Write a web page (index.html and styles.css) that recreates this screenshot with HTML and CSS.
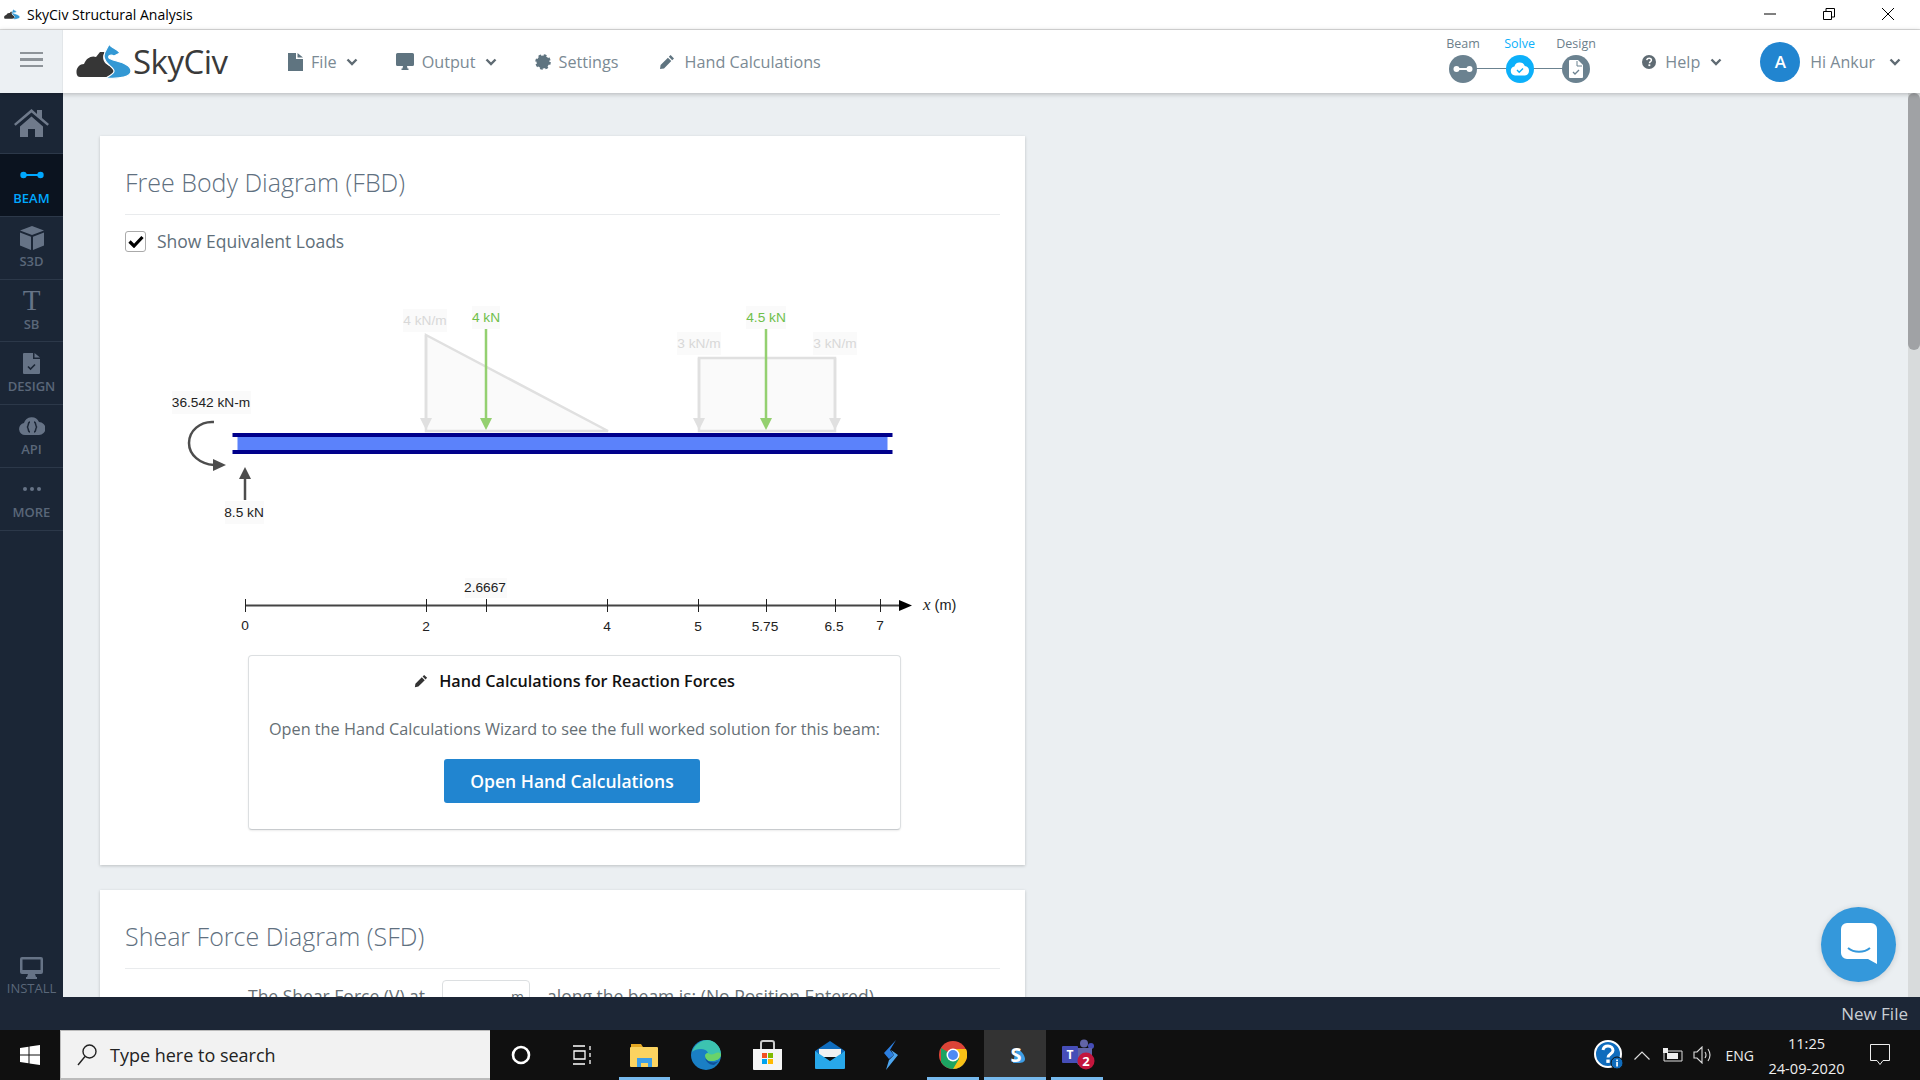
FILE: index.html
```html
<!DOCTYPE html>
<html lang="en">
<head>
  <meta charset="UTF-8" />
  <meta name="viewport" content="width=device-width, initial-scale=1.0"/>
  <title>SkyCiv Structural Analysis</title>
  <link rel="stylesheet" href="styles.css">
</head>
<body>
  <svg class="sprites" width="0" height="0">
    <symbol id="pencil" viewBox="0 0 16 16"><path d="M11.6 1 15 4.4 13.2 6.2 9.8 2.8ZM8.9 3.7 12.3 7.1 5 14.4 1 15 1.6 11Z"/></symbol>
    <symbol id="chev" viewBox="0 0 12 8"><path d="M1.5 1.5 6 6l4.500-4.500" fill="none" stroke="currentColor" stroke-width="2.400"/></symbol>
    <symbol id="logo-mark" viewBox="0 0 56 36">
      <path d="M1 31C-1 25 3 20 8 20 10 14 16 11 20 13L24 8h5C25 14 28 20 34 22 40 26 40 32 35 33H6C3 33 2 33 1 31Z" fill="#363636"/>
      <path d="M33 0C35 4 42 5 44 9L38 12C34 10 32 12 33 14 35 17 55 18 55 27 55 33 44 35 30 34 34 31 38 30 38 27 38 23 28 20 28 12 28 7 32 4 33 0Z" fill="#3398d4" stroke="#fff" stroke-width="1.200"/>
    </symbol>
  </svg>

  <div class="titlebar">
    <svg class="title-logo" width="16" height="11"><use href="#logo-mark"/></svg>
    <span class="title-text">SkyCiv Structural Analysis</span>
    <div class="win-controls">
      <svg width="12" height="12" viewBox="0 0 12 12"><path d="M0 6h12" stroke="#000"/></svg>
      <svg width="12" height="12" viewBox="0 0 12 12" fill="none" stroke="#000"><path d="M.5 3.500h8v8h-8zM3 3.500V.5h8.500V9H8.500"/></svg>
      <svg width="12" height="12" viewBox="0 0 12 12"><path d="M0 0l12 12M12 0L0 12" stroke="#000"/></svg>
    </div>
  </div>

  <div class="app">
    <div class="topbar">
      <div class="menu-btn"><span></span><span></span><span></span></div>
      <header class="header">
        <div class="logo">
          <svg width="56" height="36"><use href="#logo-mark"/></svg>
          <span class="logo-text">SkyCiv</span>
        </div>
        <nav class="nav">
          <a class="nav-item">
            <svg class="ico" width="15" height="18" viewBox="0 0 15 18"><path d="M0 0h8v6h7v12H0zM9.500 0 15 4.500H9.500z"/></svg>
            File
            <svg class="chev" width="12" height="8"><use href="#chev"/></svg>
          </a>
          <a class="nav-item">
            <svg class="ico" width="18" height="17" viewBox="0 0 18 17"><path d="M1.500 0h15A1.500 1.500 0 0 1 18 1.500v10a1.500 1.500 0 0 1-1.500 1.500H11l.5 2.500h1v1.500h-7v-1.500h1L7 13H1.500A1.500 1.500 0 0 1 0 11.500v-10A1.500 1.500 0 0 1 1.500 0z"/></svg>
            Output
            <svg class="chev" width="12" height="8"><use href="#chev"/></svg>
          </a>
          <a class="nav-item">
            <svg class="ico" width="16" height="16" viewBox="0 0 16 16" fill="none" stroke="#5f7480"><circle cx="8" cy="8" r="3.800" stroke-width="2.800"/><circle cx="8" cy="8" r="6.500" stroke-width="2.600" stroke-dasharray="2.600 2.500"/></svg>
            Settings
          </a>
          <a class="nav-item nav-hand">
            <svg class="ico" width="16" height="16"><use href="#pencil"/></svg>
            Hand Calculations
          </a>
        </nav>
        <div class="header-right">
          <div class="steps">
            <div class="step">
              <span>Beam</span>
              <span class="step-dot">
                <svg width="20" height="8" viewBox="0 0 20 8"><path d="M3 4h14" stroke="#fff" stroke-width="2"/><circle cx="3.500" cy="4" r="3" fill="#fff"/><circle cx="16.500" cy="4" r="3" fill="#fff"/></svg>
              </span>
            </div>
            <div class="step step-active">
              <span>Solve</span>
              <span class="step-dot">
                <svg width="20" height="14" viewBox="0 0 20 14"><path d="M5 13.500a4.500 4.500 0 0 1-.6-8.900A5.500 5.500 0 0 1 14.800 4 4.800 4.800 0 0 1 15 13.500z" fill="#fff"/><path d="M7 8l2.200 2.200L13 6.500" fill="none" stroke="#0cb0fa" stroke-width="1.400"/></svg>
              </span>
            </div>
            <div class="step">
              <span>Design</span>
              <span class="step-dot">
                <svg width="14" height="18" viewBox="0 0 14 18"><path d="M1 0h8l5 5v12a1 1 0 0 1-1 1H1a1 1 0 0 1-1-1V1a1 1 0 0 1 1-1z" fill="#fff"/><path d="M4 12l2 2 4-4" fill="none" stroke="#6b8290" stroke-width="1.300"/><path d="M8 1v5h5" fill="none" stroke="#6b8290"/></svg>
              </span>
            </div>
          </div>
          <a class="nav-item nav-help">
            <svg width="14" height="14" viewBox="0 0 14 14"><circle cx="7" cy="7" r="7" fill="#5f6b73"/><path d="M4.700 5.200C5 3.800 6 3.300 7.100 3.300c1.300 0 2.300.8 2.300 1.900 0 1.500-1.900 1.500-1.900 3" fill="none" stroke="#fff" stroke-width="1.500"/><rect x="6.400" y="9.300" width="1.900" height="1.800" fill="#fff"/></svg>
            Help
            <svg class="chev" width="12" height="8"><use href="#chev"/></svg>
          </a>
          <a class="nav-item user">
            <span class="avatar">A</span>
            Hi Ankur
            <svg class="chev" width="12" height="8"><use href="#chev"/></svg>
          </a>
        </div>
      </header>
    </div>

    <div class="body">
      <aside class="sidebar">
        <div class="side-item side-home">
          <svg width="35" height="28" viewBox="0 0 35 28" fill="#6f7a8b"><path d="M17.500 0 0 15l1.600 1.800L17.500 3.400l15.900 13.400L35 15l-7-6V1h-5v4zM6 17.500V28h8v-8h7v8h8V17.500L17.500 7.500z"/></svg>
        </div>
        <div class="side-item side-active">
          <span class="side-icon"><svg width="24" height="8" viewBox="0 0 24 8"><path d="M3 4h18" stroke="#00a8ff" stroke-width="2"/><circle cx="3.500" cy="4" r="3.200" fill="#00a8ff"/><circle cx="20.500" cy="4" r="3.200" fill="#00a8ff"/></svg></span>
          <span class="side-label">BEAM</span>
        </div>
        <div class="side-item">
          <span class="side-icon"><svg width="24" height="24" viewBox="0 0 24 24" fill="#667386"><path d="M12 0 24 4.500 12 9 0 4.500zM0 6.500 11 10.700V24L0 19.500zM24 6.500V19.500L13 24V10.700z"/></svg></span>
          <span class="side-label">S3D</span>
        </div>
        <div class="side-item">
          <span class="side-icon side-t">T</span>
          <span class="side-label">SB</span>
        </div>
        <div class="side-item">
          <span class="side-icon"><svg width="17" height="21" viewBox="0 0 17 21"><path d="M1 0h9v6h7v14a1 1 0 0 1-1 1H1a1 1 0 0 1-1-1V1a1 1 0 0 1 1-1zM11.500 0 17 4.500h-5.500z" fill="#667386"/><path d="M5 13.500l2.500 2.500 4.500-4.500" fill="none" stroke="#1b2636" stroke-width="1.600"/></svg></span>
          <span class="side-label">DESIGN</span>
        </div>
        <div class="side-item">
          <span class="side-icon"><svg width="26" height="18" viewBox="0 0 26 18"><path d="M6 18a6 6 0 0 1-1-11.900A8 8 0 0 1 20 5a6.500 6.500 0 0 1 0 13z" fill="#667386"/><path d="M11 5C8.500 5 10 9.500 8 10c2 .5.500 5 3 5M15 5c2.500 0 1 4.500 3 5-2 .5-.5 5-3 5" fill="none" stroke="#1b2636" stroke-width="1.500"/></svg></span>
          <span class="side-label">API</span>
        </div>
        <div class="side-item">
          <span class="side-icon"><svg width="18" height="4" viewBox="0 0 18 4" fill="#667386"><circle cx="2" cy="2" r="2"/><circle cx="9" cy="2" r="2"/><circle cx="16" cy="2" r="2"/></svg></span>
          <span class="side-label">MORE</span>
        </div>
        <div class="side-install">
          <svg width="23" height="22" viewBox="0 0 23 22"><path d="M2 0h19a2 2 0 0 1 2 2v13a2 2 0 0 1-2 2h-6l1 3h1v2H6v-2h1l1-3H2a2 2 0 0 1-2-2V2a2 2 0 0 1 2-2z" fill="#667386"/><rect x="2.500" y="2.500" width="18" height="10.500" fill="#1b2636"/></svg>
          <span class="side-label">INSTALL</span>
        </div>
      </aside>

      <main class="content">
        <section class="card">
          <h2>Free Body Diagram (FBD)</h2>
          <label class="check-row">
            <span class="checkbox"><svg width="16" height="13" viewBox="0 0 16 13"><path d="M1.500 6.500 6 11l8.500-9" fill="none" stroke="#000" stroke-width="3.200"/></svg></span>
            Show Equivalent Loads
          </label>

          <svg class="fbd" width="875" height="375" viewBox="125 270 875 375">
            <!-- load labels -->
            <g class="bg-label">
              <rect x="403" y="309" width="44" height="23"/><rect x="472" y="306" width="28" height="23"/>
              <rect x="677" y="332" width="44" height="23"/><rect x="813" y="332" width="44" height="23"/>
              <rect x="746" y="306" width="40" height="23"/><rect x="172" y="391" width="79" height="23"/>
              <rect x="225" y="501" width="39" height="23"/>
            </g>

            <!-- equivalent (grey) loads -->
            <path class="dist" d="M426 335 608 431H426Z"/>
            <path class="dist" d="M699 358H835V431H699Z"/>
            <path class="grey-line" d="M426 335V419M699 358V419M835 358V419"/>
            <path class="grey-head" d="M420 418h12l-6 12ZM693 418h12l-6 12ZM829 418h12l-6 12Z"/>
            <text class="lbl lbl-grey" x="425" y="325" text-anchor="middle">4 kN/m</text>
            <text class="lbl lbl-grey" x="699" y="348" text-anchor="middle">3 kN/m</text>
            <text class="lbl lbl-grey" x="835" y="348" text-anchor="middle">3 kN/m</text>

            <!-- point loads -->
            <path class="green-line" d="M486 329V419M766 329V419"/>
            <path class="green-head" d="M480 418h12l-6 12ZM760 418h12l-6 12Z"/>
            <text class="lbl lbl-green" x="486" y="322" text-anchor="middle">4 kN</text>
            <text class="lbl lbl-green" x="766" y="322" text-anchor="middle">4.5 kN</text>

            <!-- beam -->
            <rect x="237.500" y="436" width="650" height="15" fill="#5b82fb"/>
            <rect x="232.500" y="433" width="660" height="4" fill="#00008b"/>
            <rect x="232.500" y="450" width="660" height="4" fill="#00008b"/>

            <!-- support reactions -->
            <path class="react-line" d="M214 422C200 421 189 431 189 443 189 455 200 464 214 465"/>
            <path class="react-head" d="M213 459 226 465 213 471Z"/>
            <path class="react-line" d="M245 500V478"/>
            <path class="react-head" d="M239 479 245 467 251 479Z"/>
            <text class="lbl" x="211" y="407" text-anchor="middle">36.542 kN-m</text>
            <text class="lbl" x="244" y="517" text-anchor="middle">8.5 kN</text>

            <!-- x axis -->
            <rect class="bg-tick" x="465" y="578" width="42" height="20"/>
            <path class="axis" d="M245 605.500H902"/>
            <path class="tick" d="M245.500 599V612M426.500 599V612M486.500 599V612M607.500 599V612M698.500 599V612M766.500 599V612M835.500 599V612M880.500 599V612"/>
            <path d="M899 600 912 605.500 899 611Z" fill="#000"/>
            <g class="tick-lbl" text-anchor="middle">
              <text x="245" y="630">0</text><text x="426" y="631">2</text><text x="485" y="592">2.6667</text>
              <text x="607" y="631">4</text><text x="698" y="631">5</text><text x="765" y="631">5.75</text>
              <text x="834" y="631">6.5</text><text x="880" y="630">7</text>
            </g>
            <text class="tick-lbl x-name" x="923" y="610"><tspan class="x-var">x</tspan> (m)</text>
          </svg>

          <div class="calc-box">
            <h4>
              <svg class="pencil-dark" width="14" height="14"><use href="#pencil"/></svg>
              Hand Calculations for Reaction Forces
            </h4>
            <p>Open the Hand Calculations Wizard to see the full worked solution for this beam:</p>
            <button type="button">Open Hand Calculations</button>
          </div>
        </section>

        <section class="card">
          <h2>Shear Force Diagram (SFD)</h2>
          <div class="position-row">
            The Shear Force (V) at
            <span class="pos-input">m</span>
            along the beam is: (No Position Entered)
          </div>
        </section>
      </main>

      <div class="scrollbar"><div class="thumb"></div></div>

      <div class="chat-btn">
        <svg width="36" height="41" viewBox="0 0 36 41"><path d="M6 0h24a6 6 0 0 1 6 6v35l-9-5H6a6 6 0 0 1-6-6V6a6 6 0 0 1 6-6z" fill="#fff"/><path d="M7 25c6 5 16 5 22 0" fill="none" stroke="#3498db" stroke-width="2"/></svg>
      </div>
    </div>
  </div>

  <div class="statusbar">New File</div>

  <div class="taskbar">
    <div class="start">
      <svg width="20" height="20" viewBox="0 0 20 20" fill="#fff"><path d="M0 3 8.500 1.700V9.500H0zM9.500 1.500 20 0V9.500H9.500zM0 10.500H8.500V18.300L0 17zM9.500 10.500H20V20L9.500 18.500z"/></svg>
    </div>
    <div class="search">
      <svg width="22" height="24" viewBox="0 0 22 24" fill="none" stroke="#222" stroke-width="1.400"><circle cx="13.500" cy="8.500" r="6.500"/><path d="M9 13.500 2 22"/></svg>
      <span>Type here to search</span>
    </div>
    <div class="task"><svg width="20" height="20" viewBox="0 0 20 20"><circle cx="10" cy="10" r="8" fill="none" stroke="#fff" stroke-width="2.600"/></svg></div>
    <div class="task"><svg width="20" height="20" viewBox="0 0 20 20" fill="none" stroke="#fff" stroke-width="1.300"><path d="M0 1h12M0 19h12M1 6h11v8H1zM17 1v4M17 8v4M17 15v4"/></svg></div>
    <div class="task task-open">
      <svg width="28" height="24" viewBox="0 0 28 24"><path d="M1 1h10l2 3H1z" fill="#e5a823"/><rect y="4" width="28" height="20" rx="1" fill="#fbd360"/><path d="M7 15h15v9h-4v-4h-7v4H7z" fill="#3d9ee6"/></svg>
    </div>
    <div class="task">
      <svg width="30" height="30" viewBox="0 0 30 30"><circle cx="15" cy="15" r="15" fill="#1a7fc4"/><path d="M1 12C4 3 12 0 16 0c8 0 14 7 14 14 0 5-5 7-9 7-5 0-7-2-7-5 0-2 2-3 3-3-1-3-4-4-7-4-4 0-7 1-9 3z" fill="#3cc3b0"/><path d="M30 14c0 5-5 7-9 7-5 0-7-2-7-5 0-2 2-3 3-3 1 1 3 2 6 1 2-1 4-3 7 0z" fill="#6ad36a"/><path d="M14 16c0 6 5 9 9 9l5-4c-6 3-13 1-14-5z" fill="#0f4f9a"/></svg>
    </div>
    <div class="task">
      <svg width="29" height="30" viewBox="0 0 29 30"><path d="M8 9V3a2 2 0 0 1 2-2h9a2 2 0 0 1 2 2v6" fill="none" stroke="#ccc" stroke-width="2"/><path d="M0 9h29v20a1 1 0 0 1-1 1H1a1 1 0 0 1-1-1z" fill="#f5f5f5"/><rect x="9" y="13" width="5" height="5" fill="#f25022"/><rect x="15" y="13" width="5" height="5" fill="#7fba00"/><rect x="9" y="19" width="5" height="5" fill="#00a4ef"/><rect x="15" y="19" width="5" height="5" fill="#ffb900"/></svg>
    </div>
    <div class="task">
      <svg width="30" height="28" viewBox="0 0 30 28"><path d="M0 10 15 0l15 10v2H0z" fill="#0f6cbd"/><path d="M4 8h22v8H4z" fill="#f2f2f2"/><path d="M0 10l15 10 15-10v17a1 1 0 0 1-1 1H1a1 1 0 0 1-1-1z" fill="#28a8ea"/></svg>
    </div>
    <div class="task">
      <svg width="16" height="30" viewBox="0 0 16 30"><path d="M13 0 1 13l5 6 5-4-4-5z" fill="#2c7fe0"/><path d="M8 10l7 5L3 30l3-10 5-5z" fill="#4da6ef"/></svg>
    </div>
    <div class="task task-open">
      <svg width="28" height="28" viewBox="0 0 28 28"><circle cx="14" cy="14" r="14" fill="#dc4437"/><path d="M14 14 26 21A14 14 0 0 1 14 28 14 14 0 0 1 2 21L2 7z" fill="#1da462"/><path d="M14 8h13a14 14 0 0 1-1 13 14 14 0 0 1-12 7l6-10z" fill="#f9c116"/><circle cx="14" cy="14" r="6.500" fill="#fff"/><circle cx="14" cy="14" r="5" fill="#4d8bf5"/></svg>
    </div>
    <div class="task task-open task-active">
      <svg class="s-icon" width="18" height="18" viewBox="0 0 18 18"><path d="M9 3C13 3 18 9 18 13 18 16 15 17 11 17H6z" fill="#3d9ee6"/><text class="s-app" x="9" y="16" text-anchor="middle">S</text></svg>
    </div>
    <div class="task task-open">
      <svg class="teams" width="34" height="32" viewBox="0 0 34 32">
        <circle cx="22" cy="4.500" r="4" fill="#6264a7"/><circle cx="29" cy="7" r="3" fill="#464eb8"/>
        <path d="M14 9h16v12a6 6 0 0 1-6 6h-4a6 6 0 0 1-6-6z" fill="#6264a7"/>
        <rect y="7" width="16" height="17" rx="1" fill="#464eb8"/>
        <circle cx="24" cy="22" r="8.500" fill="#c4163d"/>
        <text class="teams-t" x="8" y="20" text-anchor="middle">T</text>
        <text class="teams-n" x="24" y="27" text-anchor="middle">2</text>
      </svg>
    </div>
    <div class="tray">
      <svg width="30" height="30" viewBox="0 0 30 30"><circle cx="14" cy="14" r="13" fill="#0f6cbd" stroke="#fff" stroke-width="2"/><path d="M9 10c.5-3 3-4 5-4 3 0 5 2 5 4.500 0 3.500-5 3.500-5 7" fill="none" stroke="#fff" stroke-width="3"/><rect x="12.300" y="19.500" width="3.400" height="3.400" fill="#fff"/><circle cx="23" cy="23" r="6" fill="#0f6cbd" stroke="#101010"/><rect x="22.200" y="22" width="1.700" height="4.500" fill="#fff"/><rect x="22.200" y="19.500" width="1.700" height="1.700" fill="#fff"/></svg>
      <svg class="tray-chev" width="16" height="9" viewBox="0 0 16 9"><path d="M.5 8.500 8 1l7.500 7.500" fill="none" stroke="#ddd" stroke-width="1.200"/></svg>
      <svg class="tray-batt" width="20" height="14" viewBox="0 0 20 14"><path d="M1 3h18v10H1z" fill="none" stroke="#ddd"/><rect x="4" y="5" width="11" height="6" fill="#eee"/><rect x="0" y="0" width="5" height="5" fill="#eee"/></svg>
      <svg class="tray-vol" width="20" height="18" viewBox="0 0 20 18" fill="none" stroke="#ddd" stroke-width="1.100"><path d="M1 6h3l5-5v16l-5-5H1zM12 6q2 3 0 6M15 3q4 6 0 12"/></svg>
      <span class="tray-lang">ENG</span>
      <div class="clock"><span>11:25</span><span>24-09-2020</span></div>
      <svg class="tray-note" width="20" height="22" viewBox="0 0 20 22"><path d="M.5.5h19v16H13l-3 4-3-4H.5z" fill="none" stroke="#eee"/></svg>
    </div>
  </div>
</body>
</html>
```

FILE: styles.css
```css
* {
  box-sizing: border-box;
}

html,
body {
  height: 100%;
}

body {
  margin: 0;
  display: flex;
  flex-direction: column;
  overflow: hidden;
  font-family: 'Open Sans', sans-serif;
  background-color: #ebeff2;
}

.sprites {
  position: absolute;
}

/* window title bar */
.titlebar {
  height: 30px;
  flex: none;
  display: flex;
  align-items: center;
  padding: 0 26px 1px 4px;
  background-color: #fff;
  border-bottom: 1px solid #dcdcdc;
  font-size: 14px;
  color: #000;
}

.title-logo {
  margin-right: 7px;
}

.win-controls {
  margin-left: auto;
  display: flex;
  gap: 47px;
}

.app {
  flex: 1;
  min-height: 0;
  display: flex;
  flex-direction: column;
}

/* app header */
.topbar {
  height: 63px;
  flex: none;
  display: flex;
  position: relative;
  z-index: 2;
  background-color: #fff;
  box-shadow: 0 1px 5px rgba(0, 0, 0, 0.25);
}

.menu-btn {
  width: 63px;
  flex: none;
  display: flex;
  flex-direction: column;
  justify-content: center;
  align-items: center;
  gap: 4px;
  padding-bottom: 4px;
  background-color: #ecf0f3;
  border-right: 1px solid #e2e6e9;
}

.menu-btn span {
  width: 23px;
  height: 2.500px;
  background-color: #8e9499;
}

.header {
  flex: 1;
  display: flex;
  align-items: center;
  padding: 0 19px 0 13px;
}

.logo {
  display: flex;
  align-items: center;
  width: 212px;
  flex: none;
}

.logo-text {
  font-size: 33px;
  color: #3a3a3a;
  letter-spacing: -0.5px;
  margin-left: 1px;
}

.nav {
  display: flex;
  gap: 38px;
}

.nav-item {
  display: flex;
  align-items: center;
  gap: 8px;
  font-size: 16.200px;
  color: #7b8a94;
}

.nav-hand {
  margin-left: 2px;
  gap: 10px;
}

.ico {
  fill: #5f7480;
}

.chev {
  color: #5f6b73;
  margin-left: 1px;
}

.header-right {
  margin-left: auto;
  display: flex;
  align-items: center;
  gap: 38px;
}

.nav-help {
  gap: 9px;
  margin-left: -1px;
}

.steps {
  display: flex;
  position: relative;
  margin-top: -6px;
  margin-right: 1px;
}

.steps::before {
  content: "";
  position: absolute;
  left: 28px;
  right: 28px;
  bottom: 14px;
  height: 1px;
  background-color: #6b8290;
}

.step {
  width: 56.500px;
  display: flex;
  flex-direction: column;
  align-items: center;
  gap: 3px;
  font-size: 12.500px;
  color: #6d7f8b;
  position: relative;
}

.step-dot {
  width: 28px;
  height: 28px;
  border-radius: 50%;
  background-color: #6b8290;
  display: flex;
  align-items: center;
  justify-content: center;
}

.step-active {
  color: #0cb0fa;
}

.step-active .step-dot {
  background-color: #0cb0fa;
}

.user {
  gap: 10px;
  font-size: 16px;
}

.user .chev {
  margin-left: 4px;
}

.avatar {
  width: 40px;
  height: 40px;
  border-radius: 50%;
  background-color: #2185d0;
  color: #fff;
  font-size: 17px;
  font-weight: 600;
  display: flex;
  align-items: center;
  justify-content: center;
}

/* main area */
.body {
  flex: 1;
  min-height: 0;
  display: flex;
  position: relative;
}

.sidebar {
  width: 63px;
  flex: none;
  display: flex;
  flex-direction: column;
  overflow: hidden;
  background-color: #1b2636;
}

.side-item {
  height: 62.800px;
  flex: none;
  display: flex;
  flex-direction: column;
  align-items: center;
  padding-top: 7px;
  border-bottom: 1px solid #2c3849;
}

.side-home {
  height: 61px;
  padding-top: 16px;
}

.side-icon {
  height: 28px;
  flex: none;
  display: flex;
  align-items: center;
}

.side-label {
  font-size: 13px;
  line-height: 18px;
  font-weight: 600;
  color: #5a6779;
}

.side-active {
  background-color: #0b131f;
}

.side-active .side-label {
  color: #00a8ff;
}

.side-t {
  font-family: 'Liberation Serif', serif;
  font-size: 29px;
  color: #667386;
}

.side-install {
  margin-top: auto;
  height: 41px;
  flex: none;
  padding-top: 1px;
  display: flex;
  flex-direction: column;
  align-items: center;
}

.side-install svg,
.side-install .side-label {
  flex: none;
}

.side-install .side-label {
  font-weight: 400;
}

.content {
  flex: 1;
  min-width: 0;
  overflow: hidden;
  padding: 43px 0 0 37px;
}

.card {
  width: 925px;
  padding: 30px 25px 35px;
  margin-bottom: 25px;
  background-color: #fff;
  box-shadow: 0 1px 3px rgba(0, 0, 0, 0.2);
}

h2 {
  margin: 0;
  padding-bottom: 15px;
  font-size: 25px;
  line-height: 33px;
  font-weight: 300;
  color: #5f7080;
  border-bottom: 1px solid #e9ebed;
}

.check-row {
  display: flex;
  align-items: center;
  gap: 11px;
  height: 20px;
  margin-top: 16px;
  font-size: 17.500px;
  color: #5f6f7a;
}

.checkbox {
  width: 21px;
  height: 21px;
  flex: none;
  display: flex;
  align-items: center;
  justify-content: center;
  border: 1px solid #aaa;
  border-radius: 3px;
  background-color: #fff;
}

/* free body diagram */
.fbd {
  display: block;
  margin-top: 19px;
}

.bg-label rect,
.bg-tick {
  fill: #fafafa;
}

.dist {
  fill: #fafafa;
  stroke: #e0e0e0;
  stroke-width: 2.500;
}

.grey-line {
  fill: none;
  stroke: #e0e0e0;
  stroke-width: 2.500;
}

.grey-head {
  fill: #e0e0e0;
}

.green-line {
  fill: none;
  stroke: #94d070;
  stroke-width: 2.500;
}

.green-head {
  fill: #94d070;
}

.react-line {
  fill: none;
  stroke: #4d4d4d;
  stroke-width: 2.500;
}

.react-head {
  fill: #4d4d4d;
}

.lbl {
  font-family: 'Liberation Sans', sans-serif;
  font-size: 13.700px;
  fill: #222;
}

.lbl-grey {
  fill: #d8d8d8;
}

.lbl-green {
  fill: #6fbf4a;
}

.axis {
  stroke: #444;
  stroke-width: 2;
}

.tick {
  stroke: #222;
  stroke-width: 1;
}

.tick-lbl {
  font-family: 'Liberation Sans', sans-serif;
  font-size: 13.700px;
  fill: #222;
}

.x-name {
  font-size: 14.500px;
}

.x-var {
  font-family: 'Liberation Serif', serif;
  font-style: italic;
  font-size: 17px;
}

.calc-box {
  width: 653px;
  height: 175px;
  margin: 10px 0 0 123px;
  padding-top: 13px;
  text-align: center;
  border: 1px solid #dcdfe1;
  border-bottom-color: #c8cbce;
  border-radius: 4px;
  box-shadow: 0 1px 2px rgba(0, 0, 0, 0.08);
}

h4 {
  margin: 0;
  display: flex;
  align-items: center;
  justify-content: center;
  gap: 11px;
  font-size: 16.200px;
  line-height: 24px;
  font-weight: 600;
  color: #111;
}

.pencil-dark {
  fill: #333;
}

.calc-box p {
  margin: 24px 0 0;
  font-size: 16.250px;
  line-height: 24px;
  color: #666f75;
}

.calc-box button {
  width: 256px;
  height: 44px;
  margin: 18px 5px 0 0;
  border: none;
  border-radius: 3px;
  background-color: #2185d0;
  color: #fff;
  font-family: inherit;
  font-size: 17.500px;
  font-weight: 600;
}

.position-row {
  display: flex;
  align-items: center;
  margin: 11px 0 0 123px;
  gap: 17px;
  font-size: 17.500px;
  color: #666f75;
}

.pos-input {
  width: 88px;
  height: 32px;
  padding: 6px 5px 0 0;
  text-align: right;
  font-size: 14px;
  border: 1px solid #dcdfe1;
  border-radius: 4px;
}

.scrollbar {
  width: 12px;
  flex: none;
  background-color: #d8dbdc;
}

.thumb {
  height: 257px;
  border-radius: 6px;
  background-color: #a0a2a5;
}

.chat-btn {
  position: absolute;
  right: 24px;
  bottom: 15px;
  width: 75px;
  height: 75px;
  border-radius: 50%;
  display: flex;
  align-items: center;
  justify-content: center;
  padding-bottom: 3px;
  background-color: #3498db;
  box-shadow: 0 1px 6px rgba(0, 0, 0, 0.15);
}

/* bottom bars */
.statusbar {
  height: 33px;
  flex: none;
  padding-right: 12px;
  text-align: right;
  font-size: 17px;
  line-height: 34px;
  color: #c9ced3;
  background-color: #1c2636;
}

.taskbar {
  height: 50px;
  flex: none;
  display: flex;
  background-color: #101010;
}

.start {
  width: 60px;
  flex: none;
  display: flex;
  align-items: center;
  justify-content: center;
}

.search {
  width: 430px;
  flex: none;
  display: flex;
  align-items: center;
  gap: 12px;
  padding-left: 15px;
  background-color: #f2f2f2;
  border: 1px solid #bbb;
  border-width: 1px 0 2px 1px;
  font-size: 18px;
  color: #222;
}

.task {
  width: 61.750px;
  flex: none;
  display: flex;
  align-items: center;
  justify-content: center;
  position: relative;
}

.task-open::after {
  content: "";
  position: absolute;
  left: 5px;
  right: 5px;
  bottom: 0;
  height: 3px;
  background-color: #76b9ed;
}

.task-active {
  background-color: #333;
}

.task-active::after {
  left: 0;
  right: 0;
}

.s-icon {
  margin-left: 3px;
}

.s-app {
  font-size: 20px;
  font-weight: 700;
  fill: #fff;
}

.teams {
  margin-left: 5px;
}

.teams-t {
  font-size: 12px;
  font-weight: 700;
  fill: #fff;
}

.teams-n {
  font-size: 13px;
  font-weight: 700;
  fill: #fff;
}

.tray {
  margin-left: auto;
  display: flex;
  align-items: center;
  padding-right: 30px;
  color: #eee;
}

.tray-chev {
  margin-left: 10px;
}

.tray-batt {
  margin-left: 13px;
}

.tray-vol {
  margin-left: 10px;
}

.tray-lang {
  margin-left: 13px;
  font-size: 14px;
}

.clock {
  width: 95px;
  margin-left: 5px;
  display: flex;
  flex-direction: column;
  align-items: center;
  gap: 5px;
  font-size: 14.600px;
  line-height: 20px;
}

.tray-note {
  margin-left: 16px;
}
```
